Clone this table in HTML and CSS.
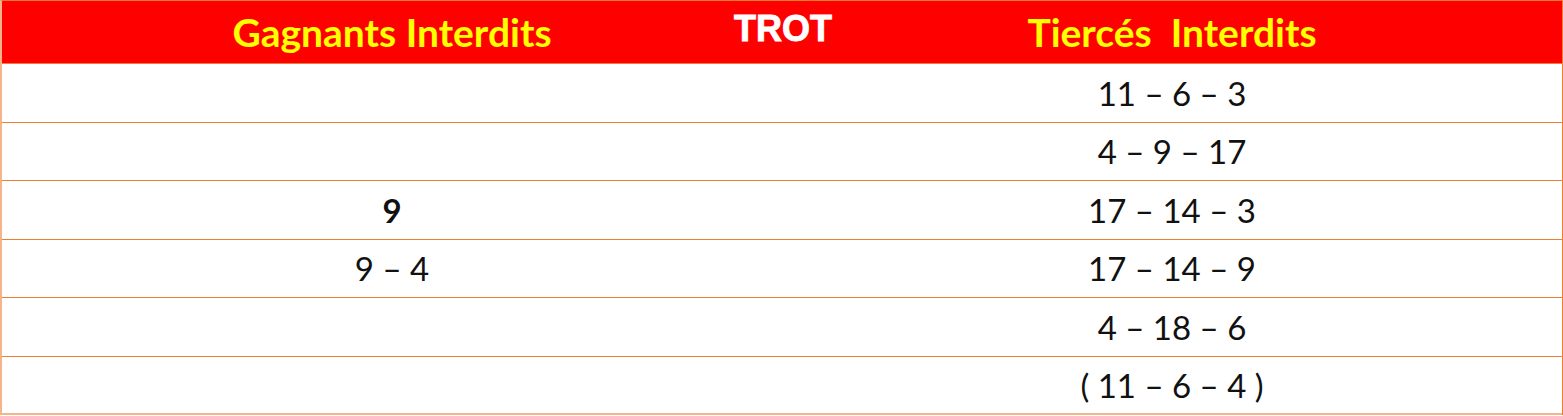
FILE: index.html
```html
<!DOCTYPE html>
<html lang="fr">
<head>
<meta charset="utf-8">
<title>TROT</title>
<link rel="stylesheet" href="styles.css">
</head>
<body>
<div class="table">
  <div class="row head">
    <div class="cell h-left">Gagnants Interdits</div>
    <div class="cell h-mid">TROT</div>
    <div class="cell h-right">Tiercés&nbsp; Interdits</div>
  </div>
  <div class="row"><div class="cell left"></div><div class="cell right">11 – 6 – 3</div></div>
  <div class="row"><div class="cell left"></div><div class="cell right">4 – 9 – 17</div></div>
  <div class="row"><div class="cell left strong">9</div><div class="cell right">17 – 14 – 3</div></div>
  <div class="row"><div class="cell left">9 – 4</div><div class="cell right">17 – 14 – 9</div></div>
  <div class="row"><div class="cell left"></div><div class="cell right">4 – 18 – 6</div></div>
  <div class="row"><div class="cell left"></div><div class="cell right">( 11 – 6 – 4 )</div></div>
</div>
</body>
</html>
```
FILE: styles.css
```css
html, body {
  margin: 0;
  padding: 0;
  background: #ffffff;
}
.table {
  width: 1563px;
  box-sizing: border-box;
  border-top: 1px solid #ED7D31;
  border-left: 2px solid #F5B48A;
  border-right: 1px solid #ED7D31;
  font-family: Lato, "Liberation Sans", sans-serif;
}
.row {
  display: grid;
  grid-template-columns: 780px 1fr;
  height: 58.5px;
  box-sizing: border-box;
  border-bottom: 1px solid #ED7D31;
  align-items: center;
}
.row:last-child {
  border-bottom: 2px solid #F5B48A;
}
.cell {
  text-align: center;
  font-size: 33px;
  color: #111111;
  grid-row: 1;
}
.left {
  grid-column: 1;
}
.right {
  grid-column: 2;
}
.strong {
  font-weight: bold;
}
.row.head {
  height: 63px;
  background: #FF0000;
}
.head .cell {
  font-weight: bold;
  color: #FFFF00;
  font-size: 39px;
}
.head .h-left {
  grid-column: 1;
}
.head .h-mid {
  grid-column: 1 / 3;
  justify-self: center;
  font-family: "Liberation Sans", Arial, sans-serif;
  font-size: 36px;
  color: #ffffff;
  -webkit-text-stroke: 0.9px #ffffff;
  margin-bottom: 6px;
  margin-left: 2px;
}
.head .h-right {
  grid-column: 2;
}
```
